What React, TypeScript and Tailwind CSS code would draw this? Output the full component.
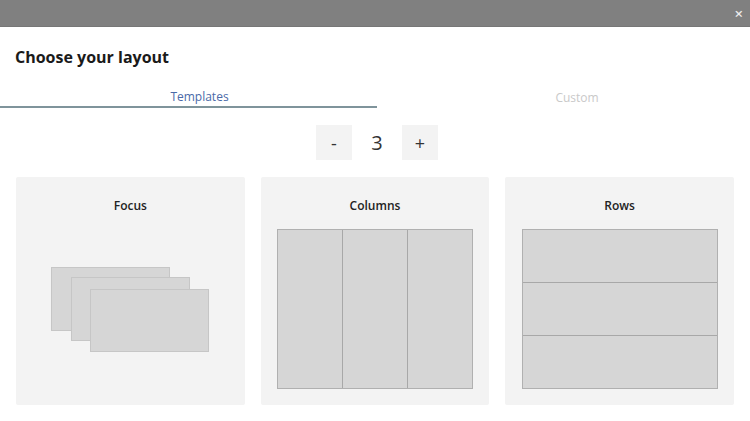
export default function App() {
  const font = { fontFamily: "'Open Sans', 'Noto Sans', sans-serif" };
  return (
    <div className="w-[750px] h-[421px] bg-white overflow-hidden flex flex-col" style={font}>
      {/* Title bar */}
      <div className="h-[27px] bg-[#808080] border-b border-[#777777] flex items-center justify-end pr-[7px]">
        <span className="text-[#ececec] text-[15px] font-semibold leading-none">×</span>
      </div>

      <h1 className="mt-[19px] ml-[15px] text-[16px] font-bold text-[#1a1a1a] leading-[22px]">
        Choose your layout
      </h1>

      {/* Tabs */}
      <div className="mt-[20px] flex">
        <div className="w-[377px] h-[20px] flex items-center justify-center pl-[22px] border-b-2 border-[#7f949b] text-[12px] text-[#4a6aa8]">
          Templates
        </div>
        <div className="flex-1 h-[20px] flex items-center justify-center pl-[27px] text-[12px] text-[#c9c9c9]">
          Custom
        </div>
      </div>

      {/* Counter */}
      <div className="mt-[17px] pl-[4px] flex items-center justify-center gap-[14px]">
        <button className="w-[36px] h-[35px] bg-[#f3f3f3] text-[18px] text-[#333] leading-none">-</button>
        <span className="w-[22px] text-center text-[20px] text-[#333]">3</span>
        <button className="w-[36px] h-[35px] bg-[#f3f3f3] text-[18px] text-[#333] leading-none">+</button>
      </div>

      {/* Cards */}
      <div className="mt-[17px] px-[16px] grid grid-cols-3 gap-[16px]">
        <Card title="Focus">
          <svg width="196" height="160" viewBox="0 0 196 160">
            <rect x="19.5" y="38.5" width="118" height="63" fill="#d6d6d6" stroke="#c6c6c6" />
            <rect x="39.5" y="48.5" width="118" height="63" fill="#d6d6d6" stroke="#c6c6c6" />
            <rect x="58.5" y="60.5" width="118" height="62" fill="#d6d6d6" stroke="#c6c6c6" />
          </svg>
        </Card>
        <Card title="Columns">
          <div className="w-[196px] h-[160px] flex border border-[#b0b0b0]">
            <div className="flex-1 bg-[#d6d6d6] border-r border-[#a8a8a8]" />
            <div className="flex-1 bg-[#d6d6d6] border-r border-[#a8a8a8]" />
            <div className="flex-1 bg-[#d6d6d6]" />
          </div>
        </Card>
        <Card title="Rows">
          <div className="w-[196px] h-[160px] flex flex-col border border-[#b0b0b0]">
            <div className="flex-1 bg-[#d6d6d6] border-b border-[#a8a8a8]" />
            <div className="flex-1 bg-[#d6d6d6] border-b border-[#a8a8a8]" />
            <div className="flex-1 bg-[#d6d6d6]" />
          </div>
        </Card>
      </div>
    </div>
  );
}

function Card({ title, children }: { title: string; children: React.ReactNode }) {
  return (
    <div className="h-[228px] bg-[#f3f3f3] rounded-[2px] flex flex-col items-center pt-[21px]">
      <div className="text-[12px] font-semibold text-[#222] leading-[16px]">{title}</div>
      <div className="mt-[15px]">{children}</div>
    </div>
  );
}
